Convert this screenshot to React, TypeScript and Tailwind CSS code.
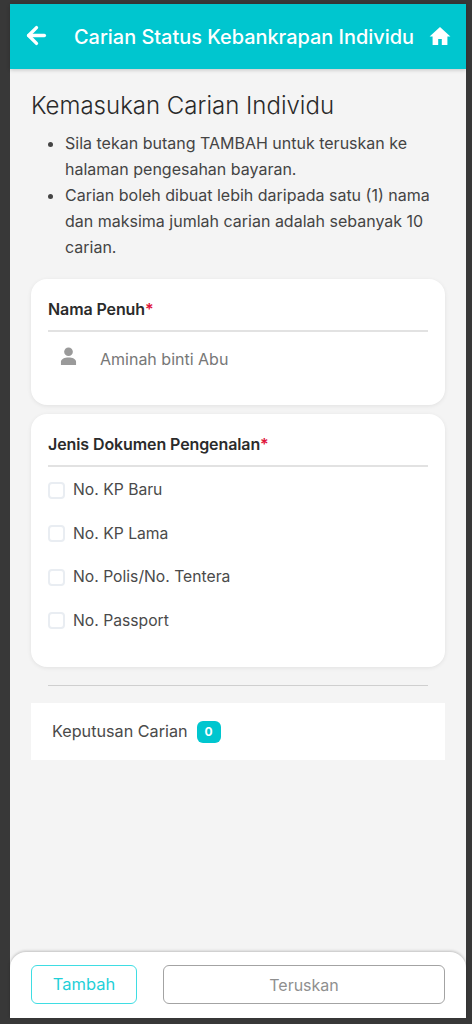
import { ArrowLeft } from 'lucide-react'

const DOCUMENT_TYPES = ['No. KP Baru', 'No. KP Lama', 'No. Polis/No. Tentera', 'No. Passport']

function HomeIcon() {
  return (
    <svg viewBox="0 0 24 24" className="w-[24px] h-[24px] fill-white -mt-[2px]">
      <path d="M12 3 1.6 12.6h3V21h5.6v-6h3.6v6h5.6v-8.4h3z" />
    </svg>
  )
}

function PersonIcon() {
  return (
    <svg viewBox="0 0 18 20" className="w-[17px] h-[19px] fill-[#9a9a9a]">
      <circle cx="9" cy="5" r="4.6" />
      <path d="M1 19v-3.5C1 12.5 5 11 9 11s8 1.500 8 4.500V19z" />
    </svg>
  )
}

function SectionTitle({ label }: { label: string }) {
  return (
    <div className="h-[53px] pt-[20px] border-b-2 border-[#e2e2e2] text-[16px] leading-[20px] font-semibold tracking-[-0.1px] text-[#2b2b2b]">
      {label}
      <span className="text-[#e0143c]">*</span>
    </div>
  )
}

export default function App() {
  return (
    <div className="h-[1024px] bg-[#383838] pt-[4px] pb-[6px] pl-[10px] pr-[6px] font-['Inter','Noto_Sans',sans-serif]">
      <div className="h-full flex flex-col bg-[#f4f4f4]">
        {/* Header */}
        <header className="h-[65px] shrink-0 flex items-center bg-[#00c6cf] shadow-[0_1px_4px_rgba(0,0,0,0.2)] pl-[13px] pr-[14px] text-white">
          <ArrowLeft className="w-[27px] h-[27px] -mt-[2px]" strokeWidth={3} />
          <h1 className="ml-[24px] flex-1 text-[19.900px] leading-[26px] font-medium whitespace-nowrap">
            Carian Status Kebankrapan Individu
          </h1>
          <HomeIcon />
        </header>

        {/* Content */}
        <main className="flex-1 px-[21px]">
          <h2 className="mt-[22px] text-[24px] leading-[30px] font-light text-[#2a2a2a]">Kemasukan Carian Individu</h2>
          <ul className="mt-[9px] list-disc pl-[34px] pr-[6px] text-[16px] leading-[26px] text-[#444]">
            <li>Sila tekan butang TAMBAH untuk teruskan ke halaman pengesahan bayaran.</li>
            <li>Carian boleh dibuat lebih daripada satu (1) nama dan maksima jumlah carian adalah sebanyak 10 carian.</li>
          </ul>

          <section className="mt-[19px] h-[126px] bg-white rounded-[16px] px-[17px] shadow-[0_1px_4px_rgba(0,0,0,0.08)]">
            <SectionTitle label="Nama Penuh" />
            <div className="flex items-start pl-[12px] pt-[15px]">
              <PersonIcon />
              <span className="ml-[23px] mt-[1px] text-[16px] leading-[22px] text-[#777]">Aminah binti Abu</span>
            </div>
          </section>

          <section className="mt-[9px] h-[253px] bg-white rounded-[16px] px-[17px] shadow-[0_1px_4px_rgba(0,0,0,0.08)]">
            <SectionTitle label="Jenis Dokumen Pengenalan" />
            <div className="flex flex-col gap-[21.500px] mt-[12px]">
              {DOCUMENT_TYPES.map(doc => (
                <label key={doc} className="flex items-center h-[22px] text-[15.700px] text-[#4a4a4a]">
                  <span className="w-[17px] h-[17px] rounded-[4px] border-2 border-[#e9edf2] bg-white shrink-0" />
                  <span className="ml-[8px]">{doc}</span>
                </label>
              ))}
            </div>
          </section>

          <div className="mx-[17px] mt-[18px] border-t border-[#cfcfcf]" />

          <div className="mt-[17px] h-[57px] bg-white flex items-center pl-[21px]">
            <span className="text-[16.200px] text-[#4a4a4a]">Keputusan Carian</span>
            <span className="ml-[9px] w-[24px] h-[22px] rounded-[6px] bg-[#00c6cf] text-white text-[12px] font-bold flex items-center justify-center">
              0
            </span>
          </div>
        </main>

        {/* Footer actions */}
        <footer className="h-[66px] shrink-0 bg-white rounded-t-[16px] shadow-[0_-1px_3px_rgba(0,0,0,0.22)] flex items-start gap-[26px] pt-[13px] pl-[21px] pr-[21px]">
          <button className="w-[106px] h-[39px] rounded-[6px] border-[1.5px] border-[#3fdde3] text-[#1fd0d8] text-[16.500px] bg-white">
            Tambah
          </button>
          <button className="flex-1 h-[39px] rounded-[6px] border-[1.5px] border-[#a3a3a3] text-[#8f8f8f] text-[16px] bg-white">
            Teruskan
          </button>
        </footer>
      </div>
    </div>
  )
}
